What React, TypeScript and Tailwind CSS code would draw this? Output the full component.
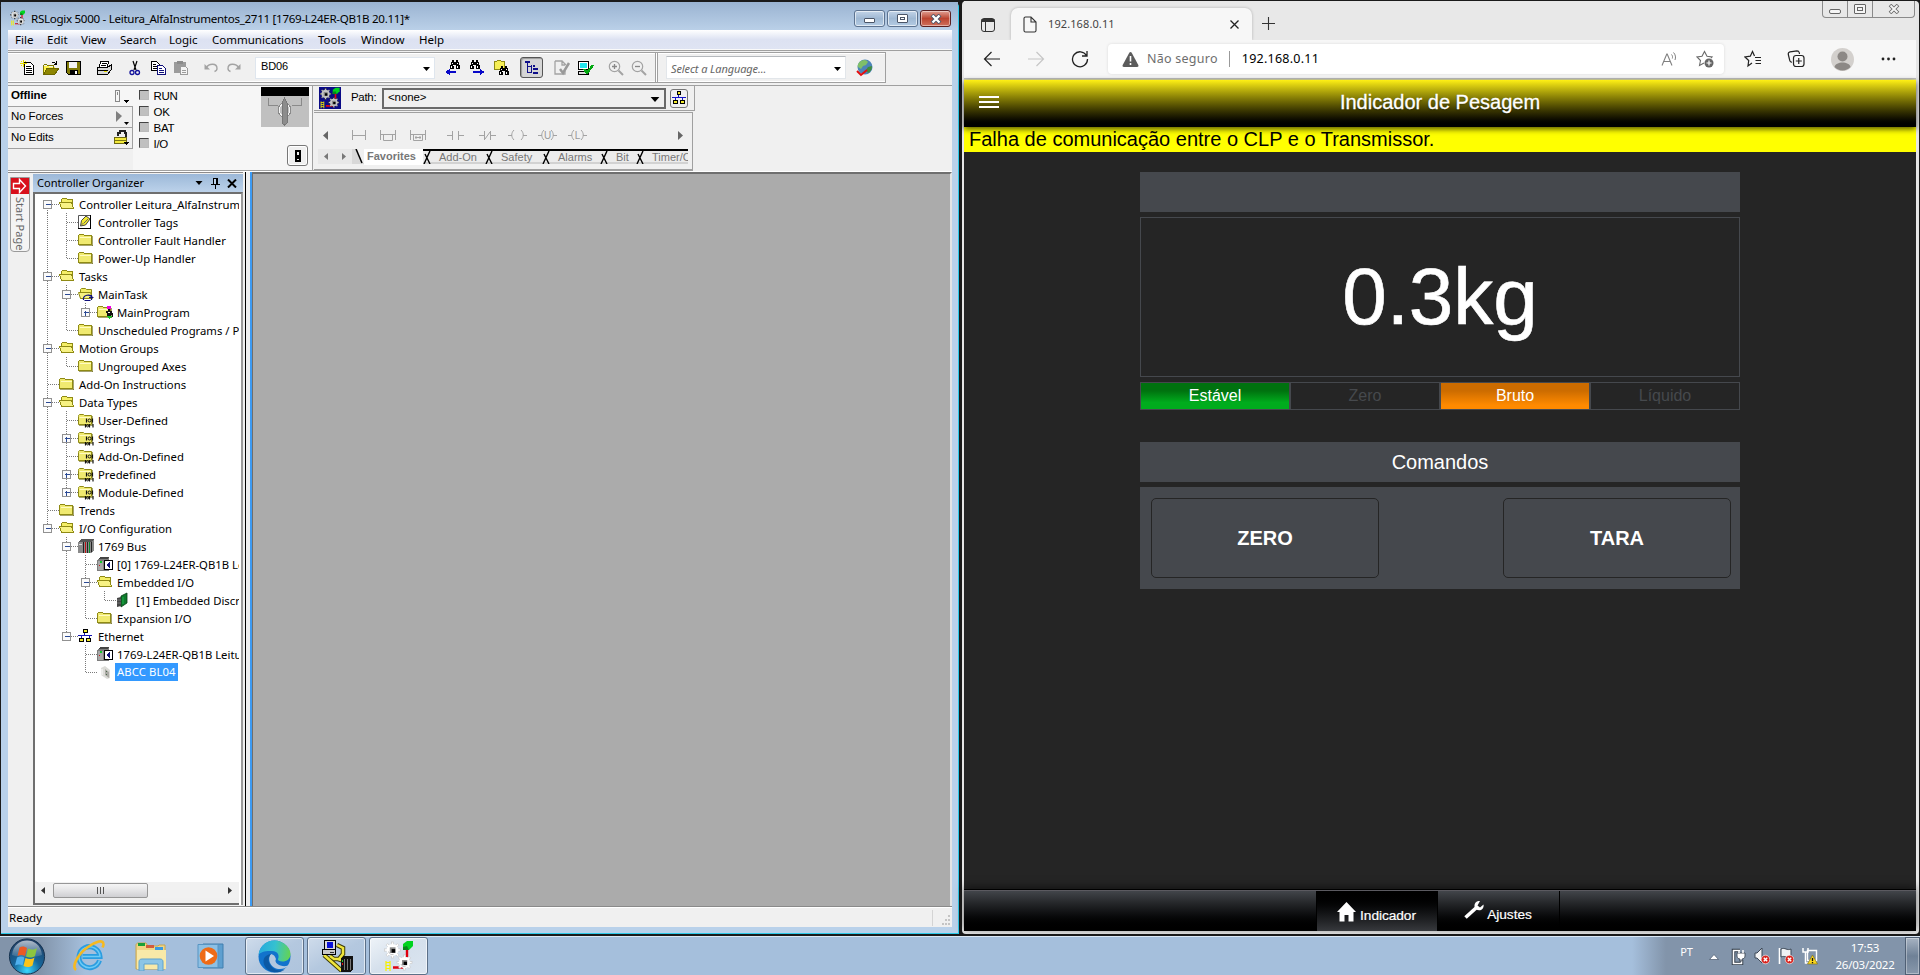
import React from "react";

type SvgProps = { className?: string; children?: React.ReactNode; box?: string };

function Pix({ className = "w-4 h-4", children, box = "0 0 16 16" }: SvgProps) {
  return (
    <svg className={"shrink-0 " + className} viewBox={box} fill="none" shapeRendering="crispEdges">
      {children}
    </svg>
  );
}

function Smooth({ className = "w-4 h-4", children, box = "0 0 16 16" }: SvgProps) {
  return (
    <svg className={"shrink-0 " + className} viewBox={box} fill="none">
      {children}
    </svg>
  );
}

function Down({ className = "w-[7px] h-1" }: { className?: string }) {
  return (
    <Smooth className={className} box="0 0 7 4">
      <path d="M0 0h7L3.5 4z" fill="#000" />
    </Smooth>
  );
}

/* ---------- Application icons ---------- */

function Gear({ x, y, r, fill, line }: { x: number; y: number; r: number; fill: string; line: string }) {
  return (
    <g transform={`translate(${x} ${y})`}>
      {[0, 45, 90, 135].map((a) => (
        <rect key={a} x={-r - 2} y="-1.100" width={2 * r + 4} height="2.200" fill={fill} stroke={line} strokeWidth=".6" transform={`rotate(${a})`} />
      ))}
      <circle r={r} fill={fill} />
      <path d={`M${-r + 2} 1.500a${r - 2} ${r - 2} 0 0 0 ${r - 1} ${r - 3}`} stroke="#b5b5b5" strokeWidth=".8" />
      <rect x={-r * 0.45} y={-r * 0.45} width={r * 0.95} height={r * 0.95} fill="#8a8a8a" />
      <rect x={-r * 0.15} y={-r * 0.15} width={r * 0.6} height={r * 0.6} fill="#000" />
    </g>
  );
}

function GearsIcon({ className = "w-4 h-4", back = "none", gear = "#f2f2f2", line = "none" }) {
  return (
    <Smooth className={className} box="0 0 32 32">
      <rect width="32" height="32" fill={back} />
      <path d="M24 10v7M10 27.500h10" stroke="#e00010" strokeWidth="2.400" />
      <path d="M3 21v10M7 21v10M3 22.500h4M3 25.500h4M3 28.500h4" stroke="#f6f000" strokeWidth="1.200" />
      <path d="M20 4l4-3h6v5l-4 4h-6z" fill="#00d31e" />
      <path d="M20 7l4-1 2 4h-6z" fill="#07861a" />
      <Gear x={9.500} y={10} r={6} fill={gear} line={line} />
      <Gear x={21.500} y={22.500} r={5.500} fill={gear} line={line} />
    </Smooth>
  );
}

function Binoculars({ x = 0, y = 0 }) {
  return (
    <g transform={`translate(${x} ${y})`}>
      <path d="M3 0h2v2h2V0h2v2h1v3h1v4H7V5H5v4H1V5h1V2h1z" fill="#000" />
      <path d="M3 3h1v1H3zM8 3h1v1H8zM2 6h1v2H2zM8 6h1v2H8zM4 5h1v1H4z" fill="#fff" />
    </g>
  );
}

/* ---------- Tree ---------- */

type Node = { t: string; d: number; i: string; e?: "+" | "-"; lines: number[]; first?: boolean; end?: boolean; sel?: boolean };

const nodes: Node[] = [
  { t: "Controller Leitura_AlfaInstrume", d: 0, i: "open", e: "-", lines: [], first: true },
  { t: "Controller Tags", d: 1, i: "tag", lines: [0] },
  { t: "Controller Fault Handler", d: 1, i: "folder", lines: [0] },
  { t: "Power-Up Handler", d: 1, i: "folder", lines: [0], end: true },
  { t: "Tasks", d: 0, i: "open", e: "-", lines: [] },
  { t: "MainTask", d: 1, i: "task", e: "-", lines: [0] },
  { t: "MainProgram", d: 2, i: "prog", e: "+", lines: [0, 1], end: true },
  { t: "Unscheduled Programs / P", d: 1, i: "folder", lines: [0], end: true },
  { t: "Motion Groups", d: 0, i: "open", e: "-", lines: [] },
  { t: "Ungrouped Axes", d: 1, i: "folder", lines: [0], end: true },
  { t: "Add-On Instructions", d: 0, i: "folder", lines: [] },
  { t: "Data Types", d: 0, i: "open", e: "-", lines: [] },
  { t: "User-Defined", d: 1, i: "type", lines: [0] },
  { t: "Strings", d: 1, i: "type", e: "+", lines: [0] },
  { t: "Add-On-Defined", d: 1, i: "type", lines: [0] },
  { t: "Predefined", d: 1, i: "type", e: "+", lines: [0] },
  { t: "Module-Defined", d: 1, i: "type", e: "+", lines: [0], end: true },
  { t: "Trends", d: 0, i: "folder", lines: [] },
  { t: "I/O Configuration", d: 0, i: "open", e: "-", lines: [], end: true },
  { t: "1769 Bus", d: 1, i: "bus", e: "-", lines: [] },
  { t: "[0] 1769-L24ER-QB1B Lei", d: 2, i: "cpu", lines: [1] },
  { t: "Embedded I/O", d: 2, i: "open", e: "-", lines: [1] },
  { t: "[1] Embedded Discr", d: 3, i: "card", lines: [1, 2], end: true },
  { t: "Expansion I/O", d: 2, i: "folder", lines: [1], end: true },
  { t: "Ethernet", d: 1, i: "net", e: "-", lines: [], end: true },
  { t: "1769-L24ER-QB1B Leitu", d: 2, i: "cpu", lines: [] },
  { t: "ABCC BL04", d: 2, i: "dev", lines: [], end: true, sel: true },
];

function FolderShape() {
  return (
    <>
      <path d="M.5 4.500v-1l1-1h4l1 1h7v9H.5z" fill="#f0ea70" stroke="#8f8a14" />
      <path d="M1.500 5.500h11" stroke="#fffbc0" />
      <path d="M14.500 4v9.500H1" stroke="#6b6710" strokeWidth=".6" />
    </>
  );
}

function OpenShape() {
  return (
    <>
      <path d="M2.500 12.500v-9l1-1h4l1 1h5v9z" fill="#f4ee66" stroke="#8f8a14" />
      <path d="M.5 6.500h12l2 6h-12z" fill="#f7f283" stroke="#8f8a14" />
    </>
  );
}

function TreeIcon({ kind }: { kind: string }) {
  const cls = "w-4 h-4";
  switch (kind) {
    case "folder":
      return <Pix className={cls}><FolderShape /></Pix>;
    case "open":
      return <Pix className={cls}><OpenShape /></Pix>;
    case "tag":
      return (
        <Smooth className={cls}>
          <path d="M.5 1.500h12v13H.5z" fill="#fff" stroke="#555" />
          <path d="M12.500 1v14M0 14.500h13" stroke="#000" />
          <path d="M2.500 12l1-5.500L8 2l4 3-4.500 6z" fill="#f2e92e" stroke="#333" strokeWidth=".9" />
          <path d="M6 9l4-4M2.500 12l3-3" stroke="#666" />
        </Smooth>
      );
    case "task":
      return (
        <Smooth className={cls}>
          <OpenShape />
          <path d="M5.500 14c-1-5 7-7 9-2M11 11.500h4.500M13.500 9v5M6.500 14.500h6" stroke="#10107a" strokeWidth="1.200" />
        </Smooth>
      );
    case "prog":
      return (
        <Pix className={cls}>
          <FolderShape />
          <path d="M10 2h4v3h-4z" fill="#f000e0" />
          <path d="M11 5h2v2h-2zM9 7h6v2H9zM14 9h2v4h-3v-1h2zM10 9h4v3h-4z" fill="#111" />
          <path d="M11 8h2v1h-2z" fill="#fff" />
          <path d="M10 12h5v1h-1v1h-1v1h-1v-1h-1v-1h-1z" fill="#17c52a" />
        </Pix>
      );
    case "type":
      return (
        <Smooth className={cls}>
          <FolderShape />
          <path d="M8.500 6.500v4M14.500 6.500v4M7.500 12v3.500M11.500 12v3.500M15 12v3.500" stroke="#111" strokeWidth="1.200" />
          <circle cx="11.500" cy="8.500" r="1.500" stroke="#111" />
          <circle cx="9.600" cy="13.800" r="1.100" stroke="#111" />
        </Smooth>
      );
    case "bus":
      return (
        <Pix className={cls}>
          <path d="M0 4l3-3h13v11l-2 3H0z" fill="#8a8a8a" />
          <path d="M0 4l3-3h13l-2 3z" fill="#555" />
          <path d="M5 4h1v11H5zM9 4h1v11H9zM13 4h1v10h-1z" fill="#222" />
          <path d="M7 4h1v11H7z" fill="#c01313" />
          <path d="M11 4h1v11h-1z" fill="#0a8a2a" />
          <path d="M1 6h3v1H1z" fill="#ddd" />
        </Pix>
      );
    case "cpu":
      return (
        <Pix className={cls}>
          <path d="M0 4l3-3h9v14H0z" fill="#7d7d7d" />
          <path d="M0 4l3-3h9l-2 2H2z" fill="#444" />
          <path d="M1 5h5v9H1z" fill="#a7a7a7" />
          <path d="M3 5h2v2H3z" fill="#11c92a" />
          <path d="M2 9h1v1H2z" fill="#d01515" />
          <path d="M7.500 4.500h8v9h-8z" fill="#fff" stroke="#000" />
          <path d="M13 6v6l-4-3z" fill="#10107a" />
        </Pix>
      );
    case "card":
      return (
        <Smooth className={cls}>
          <path d="M5 4l6-3v10l-6 4z" fill="#0f7a2c" stroke="#063d14" strokeWidth=".8" />
          <path d="M1 6l4-1v9l-4 1z" fill="#444" />
          <path d="M7 5v7" stroke="#1db14a" />
          <path d="M1 8h4M1 11h4" stroke="#999" strokeWidth=".6" />
        </Smooth>
      );
    case "net":
      return (
        <Pix className={cls}>
          <path d="M0 7h14v1H0zM6 5h1v3H6zM3 8h1v2H3zM11 8h1v2h-1z" fill="#1515b5" />
          <path d="M5.500 1.500h4v3h-4zM1.500 10.500h4v3h-4zM8.500 10.500h4v3h-4z" fill="#f2ea2c" stroke="#000" />
        </Pix>
      );
    default:
      return (
        <Smooth className={cls}>
          <path d="M4 4l4-2 5 4v8l-3 1-6-4z" fill="#dcdcd8" />
          <path d="M8 5l4 3v6l-4-3z" fill="#aaa9a4" />
          <path d="M5 5v6" stroke="#fff" />
          <path d="M9 7l1 1M9 10l1 1" stroke="#4d6b4d" />
        </Smooth>
      );
  }
}

function TreeRow({ n }: { n: Node }) {
  const w = 19 * (n.d + 1) + 2;
  const cx = 19 * n.d + 9.5;
  return (
    <div className="flex h-[18px] items-center whitespace-nowrap">
      <svg className="h-[18px] shrink-0" width={w} height="18" fill="none" shapeRendering="crispEdges">
        <g stroke="#7a7a7a" strokeDasharray="1 1">
          {n.lines.map((l) => (
            <path key={l} d={`M${19 * l + 9.5} 0v18`} />
          ))}
          <path d={n.first ? `M${cx} 9v9` : `M${cx} 0v${n.end ? 9 : 18}`} />
          <path d={`M${cx} 9.500H${w}`} />
        </g>
        {n.e && (
          <>
            <rect x={cx - 4} y="5.500" width="8" height="8" fill="#fbfbfb" stroke="#919191" />
            <path d={`M${cx - 2} 9.500h5`} stroke="#2b4a94" />
            {n.e === "+" && <path d={`M${cx} 7.500v5`} stroke="#2b4a94" />}
          </>
        )}
      </svg>
      <TreeIcon kind={n.i} />
      <span
        className={
          n.sel
            ? "ml-[2px] h-[18px] bg-[#3399ff] px-[2px] leading-[17px] text-white tracking-[0.1px]"
            : "ml-1 leading-[17px] text-black"
        }
      >
        {n.t}
      </span>
    </div>
  );
}

/* ---------- RSLogix window ---------- */

const menus = [
  ["File", "w-8"],
  ["Edit", "w-[34px]"],
  ["View", "w-[39px]"],
  ["Search", "w-[49px]"],
  ["Logic", "w-[43px]"],
  ["Communications", "w-[106px]"],
  ["Tools", "w-[43px]"],
  ["Window", "w-[58px]"],
  ["Help", "w-10"],
];

function TitleBar() {
  return (
    <div className="flex h-7 items-center bg-gradient-to-b from-[#9ab3d1] to-[#bad0e8] pl-[9px] pr-[7px]">
      <GearsIcon className="mt-1 h-4 w-4" gear="#e4e4e4" line="#111" />
      <span className="ml-[5px] mt-[6px] whitespace-nowrap text-[11.6px] leading-4 tracking-[-0.3px] text-black">
        RSLogix 5000 - Leitura_AlfaInstrumentos_2711 [1769-L24ER-QB1B 20.11]*
      </span>
      <div className="ml-auto mt-[5px] flex gap-[2px]">
        <div className="flex h-[17px] w-[31px] items-center justify-center rounded-[3px] border border-[#5d7390] bg-gradient-to-b from-[#c3d4e8] via-[#9fb8d3] to-[#b4cce4] shadow-[inset_0_0_0_1px_rgba(255,255,255,0.6)]">
          <span className="mt-[3px] h-[5px] w-[11px] rounded-[1px] border border-[#4a5568] bg-white" />
        </div>
        <div className="flex h-[17px] w-[31px] items-center justify-center rounded-[3px] border border-[#5d7390] bg-gradient-to-b from-[#c3d4e8] via-[#9fb8d3] to-[#b4cce4] shadow-[inset_0_0_0_1px_rgba(255,255,255,0.6)]">
          <span className="flex h-[9px] w-[11px] items-center justify-center rounded-[1px] border border-[#4a5568] bg-white">
            <span className="h-[3px] w-[5px] border border-[#4a5568]" />
          </span>
        </div>
        <div className="flex h-[17px] w-[31px] items-center justify-center rounded-[3px] border border-[#5b1f1f] bg-gradient-to-b from-[#e0a094] via-[#bb4430] to-[#d0705c] shadow-[inset_0_0_0_1px_rgba(255,255,255,0.45)]">
          <Smooth className="h-[10px] w-3" box="0 0 12 10">
            <path d="M2 1l8 8M10 1L2 9" stroke="#4a5568" strokeWidth="4" />
            <path d="M2.500 1.500l7 7M9.500 1.500l-7 7" stroke="#fff" strokeWidth="2.300" />
          </Smooth>
        </div>
      </div>
    </div>
  );
}

function StandardBar() {
  return (
    <div className="flex h-[31px] items-center border-y border-[#a0a0a0] shadow-[inset_0_1px_0_#fff,inset_0_-1px_0_#fff]">
      <div className="flex w-[247px] items-center">
        <Pix className="ml-3 h-4 w-4">
          <path d="M4.500 2.500h6l3 3v9h-9z" fill="#fff" stroke="#000" />
          <path d="M6 6h5v1H6zM6 8h6v1H6zM6 10h6v1H6zM6 12h6v1H6z" fill="#000" />
          <path d="M3 0h1v7H3zM0 3h7v1H0zM1 1h1v1H1zM5 1h1v1H5zM1 5h1v1H1z" fill="#e8df00" />
        </Pix>
        <Pix className="ml-[7px] h-4 w-4">
          <path d="M1 6h4l1 1h6v7H1z" fill="#fff34a" />
          <path d="M0 5h1v9H0zM1 4h3v1H1zM4 5h7v3h-1V6H4zM0 14h11v1H0z" fill="#7c7700" />
          <path d="M4 8h12l-4 6H1z" fill="#8d8500" stroke="#6b6600" />
          <path d="M9 2h3v1H9zM12 3h1v1h-1zM13 1h1v4h-3V4h2z" fill="#000" />
        </Pix>
        <Pix className="ml-[7px] h-4 w-4">
          <path d="M.5 1.500h14v13H2.500l-2-2z" fill="#817b07" stroke="#000" />
          <path d="M3 2h8v6H3z" fill="#f3f3f3" />
          <path d="M4 10h8v4H4z" fill="#000" />
          <path d="M9 11h2v3H9z" fill="#fff" />
        </Pix>
        <Pix className="ml-[14px] h-4 w-[17px]" box="0 0 17 16">
          <path d="M5 1h8l-2 6H3z" fill="#fff" stroke="#000" />
          <path d="M1 7h11l3-2v5l-3 4H1z" fill="#d7d7d7" stroke="#000" />
          <path d="M6 3h5v1H6zM5 5h5v1H5zM2 10h10v1H2z" fill="#000" />
          <path d="M8 11h3v1H8z" fill="#e6dc00" />
        </Pix>
        <Smooth className="ml-[14px] h-4 w-4">
          <path d="M6 1l3 9M10 1L7 10" stroke="#000" strokeWidth="1.200" />
          <circle cx="5" cy="12.500" r="2" stroke="#10109a" strokeWidth="1.300" />
          <circle cx="10.500" cy="12.500" r="2" stroke="#10109a" strokeWidth="1.300" />
        </Smooth>
        <Pix className="ml-[7px] h-4 w-4">
          <path d="M1.500 1.500h5l3 3v6h-8z" fill="#fff" stroke="#000" />
          <path d="M3 4h3v1H3zM3 6h4v1H3zM3 8h4v1H3z" fill="#000" />
          <path d="M7.500 5.500h5l3 3v6h-8z" fill="#fff" stroke="#10107a" />
          <path d="M9 8h3v1H9zM9 10h5v1H9zM9 12h5v1H9z" fill="#10107a" />
        </Pix>
        <Pix className="ml-[7px] h-4 w-4">
          <path d="M1 2h12v11H1z" fill="#9b9b9b" />
          <path d="M4 1h6v3H4z" fill="#8b8b8b" />
          <path d="M7.500 6.500h5l2 2v6h-7z" fill="#f5f5f5" stroke="#9b9b9b" />
          <path d="M9 10h4v1H9zM9 12h4v1H9z" fill="#9b9b9b" />
        </Pix>
        <Smooth className="ml-[14px] h-4 w-4">
          <path d="M1.500 4v5.500H7z" fill="#a3a3a3" />
          <path d="M3 8c3-5 11-5 11 .5 0 1.500-1 2.500-2.500 3" stroke="#a3a3a3" strokeWidth="1.400" />
        </Smooth>
        <Smooth className="ml-[7px] h-4 w-4">
          <path d="M14.500 4v5.500H9z" fill="#a3a3a3" />
          <path d="M13 8c-3-5-11-5-11 .5 0 1.500 1 2.500 2.500 3" stroke="#a3a3a3" strokeWidth="1.400" />
        </Smooth>
      </div>
      <div className="flex h-[22px] w-[180px] items-center border border-[#dfe6ee] bg-white pl-[5px] pr-1 text-[11px] tracking-[-0.1px] text-black">
        <span className="-mt-[2px] font-['Liberation_Sans',sans-serif]">BD06</span>
        <Down className="ml-auto mt-[2px] h-1 w-[7px]" />
      </div>
      <Pix className="ml-[10px] h-[17px] w-[17px]" box="0 0 17 17">
        <Binoculars x={4} y={1} />
        <path d="M0 13l5-3v2h6v2H5v2z" fill="#0808c8" />
      </Pix>
      <Pix className="ml-[7px] h-[17px] w-[17px]" box="0 0 17 17">
        <Binoculars x={0} y={1} />
        <path d="M16 13l-5-3v2H4v2h7v2z" fill="#0808c8" />
      </Pix>
      <Pix className="ml-[7px] h-[17px] w-[17px]" box="0 0 17 17">
        <path d="M1.500 2.500h2l1-1h3l1 1h3v8h-10z" fill="#f6ef55" stroke="#8f8a14" />
        <Binoculars x={5} y={7} />
      </Pix>
      <div className="ml-[10px] flex h-[21px] w-[23px] items-center justify-center rounded-[3px] border border-[#555] bg-[#d6d6d6] shadow-[inset_1px_1px_1px_#999]">
        <Pix className="h-[15px] w-[15px]" box="0 0 15 15">
          <path d="M1 1h5v2H1zM3 3h1v10H3zM4 6h3v1H4zM4 12h3v1H4z" fill="#10108a" />
          <path d="M7 5h1v8H7zM9 5h2v2H9zM9 8h5v2H9zM9 12h5v2H9z" fill="#10108a" />
        </Pix>
      </div>
      <Smooth className="ml-[11px] h-4 w-[17px]" box="0 0 17 16">
        <path d="M1 1h7l4 4M1 1v13h10v-3M8 1v4h3" stroke="#a3a3a3" strokeWidth="1.300" />
        <path d="M6 9l3 4 6-10" stroke="#999" strokeWidth="2.500" />
      </Smooth>
      <Pix className="ml-[6px] h-4 w-[17px]" box="0 0 17 16">
        <path d="M1.500 1.500h10v8h-10z" fill="#fff" stroke="#000" />
        <path d="M3 3h7v5H3z" fill="#22e5ee" />
        <path d="M1.500 11.500h10v3h-10z" fill="#ddd" stroke="#000" />
        <path d="M7 9l3 4 6-8" stroke="#00a810" strokeWidth="2.500" />
      </Pix>
      <Smooth className="ml-[14px] h-4 w-4">
        <circle cx="6.500" cy="6.500" r="5.200" stroke="#a3a3a3" strokeWidth="1.200" />
        <path d="M4 6.500h5M6.500 4v5" stroke="#888" strokeWidth="1.300" />
        <path d="M10.500 10.500l4.500 4.500" stroke="#a3a3a3" strokeWidth="2" />
      </Smooth>
      <Smooth className="ml-[7px] h-4 w-4">
        <circle cx="6.500" cy="6.500" r="5.200" stroke="#a3a3a3" strokeWidth="1.200" />
        <path d="M4 6.500h5" stroke="#888" strokeWidth="1.300" />
        <path d="M10.500 10.500l4.500 4.500" stroke="#a3a3a3" strokeWidth="2" />
      </Smooth>
      <div className="ml-[8px] h-[29px] w-[3px] border-x border-[#a0a0a0] bg-white" />
      <div className="ml-[8px] flex h-[23px] w-[180px] items-center border border-[#e2e6ea] border-t-[#b5b9bd] bg-white pl-1 pr-1 text-[11px] italic text-[#666]">
        <span className="mt-1 tracking-[-0.1px]">Select a Language...</span>
        <Down className="ml-auto mt-[2px] h-1 w-[7px]" />
      </div>
      <Smooth className="ml-[10px] h-[18px] w-[18px]" box="0 0 18 18">
        <circle cx="9" cy="8" r="7.500" fill="#4c84b8" />
        <path d="M5 2c3-2 6-1 7 1l-2 3-3 1-2 3-3-2c-1-2 1-5 3-6z" fill="#7fbf68" />
        <path d="M12 8l4-1c0 4-2 6-4 7l-2-3z" fill="#3f8c3c" />
        <path d="M1 12l4 4 6-5" stroke="#e30d0d" strokeWidth="2" />
      </Smooth>
    </div>
  );
}

function StatusPanel() {
  return (
    <div className="flex h-[84px] w-[305px] border-r border-[#a0a0a0] bg-[#f6f6f6] font-['Liberation_Sans',sans-serif] text-[11.5px] tracking-[-0.1px] text-black">
      <div className="flex w-[125px] flex-col">
        <div className="flex h-[20px] items-center pl-[3px] pr-1">
          <span className="font-bold tracking-[-0.1px]">Offline</span>
          <Pix className="ml-auto h-4 w-[15px]" box="0 0 15 16">
            <path d="M1.500 2.500h4v11h-4z" fill="#f5f5f5" stroke="#888" />
            <path d="M3 4h1v3H3z" fill="#888" />
            <path d="M10 12h5l-2.500 3z" fill="#000" />
          </Pix>
        </div>
        <div className="flex h-[22px] items-center border border-l-0 border-[#a0a0a0] bg-[#f0f0f0] pl-[3px] pr-[3px]">
          <span>No Forces</span>
          <Smooth className="ml-auto h-[18px] w-[15px]" box="0 0 15 18">
            <path d="M2 3l6 5-6 6z" fill="#808080" />
            <path d="M10 14h5l-2.500 3z" fill="#000" />
          </Smooth>
        </div>
        <div className="flex h-[21px] items-center border border-l-0 border-t-0 border-[#a0a0a0] bg-[#f0f0f0] pl-[3px] pr-[3px]">
          <span>No Edits</span>
          <Pix className="ml-auto h-4 w-[15px]" box="0 0 15 16">
            <path d="M4 6V3h2V1h5v2h1v4" stroke="#222" strokeWidth="1.500" />
            <path d="M.5 7.500h12v6h-12z" fill="#f3e93a" stroke="#6d6812" />
            <path d="M1 10h11v1H1z" fill="#7a7512" />
            <path d="M9 12h6l-3 3z" fill="#000" />
          </Pix>
        </div>
        <div className="grow bg-[#f0f0f0]" />
      </div>
      <div className="flex w-[120px] flex-col gap-[7px] pl-[6px] pt-[5px]">
        {["RUN", "OK", "BAT", "I/O"].map((t) => (
          <div key={t} className="flex h-[9px] items-center gap-[5px]">
            <span className="mb-px h-[10px] w-[10px] border border-[#bbb] border-l-[#444] border-t-[#444] bg-[#c0c0c0]" />
            <span className="pt-[3px] leading-none tracking-[-0.3px]">{t}</span>
          </div>
        ))}
      </div>
      <div className="flex w-[60px] flex-col items-end">
        <Pix className="mr-[3px] mt-px h-10 w-12" box="0 0 48 40">
          <path d="M0 0h48v40H0z" fill="#c0c0c0" />
          <path d="M0 0h48v9H0z" fill="#000" />
          <path d="M7.500 11v7.500H17M40.500 11v7.500H31" stroke="#8a8a8a" />
          <ellipse cx="23.500" cy="23" rx="6.500" ry="7" stroke="#8a8a8a" />
          <ellipse cx="23.500" cy="23" rx="5.500" ry="6" stroke="#f2f2f2" />
          <path d="M23.500 11l2.500 5v20l-2.500 2-2.500-2V16z" fill="#8c8c8c" stroke="#777" />
        </Pix>
        <div className="mr-1 mt-[18px] flex h-[21px] w-[21px] items-center justify-center rounded-[3px] border border-[#777] bg-[#f0f0f0] shadow-[inset_0_0_0_1px_#fff]">
          <Pix className="h-3 w-[6px]" box="0 0 6 12">
            <path d="M0 0h6v12H0z" fill="#000" />
            <path d="M2 2h2v8H2z" fill="#eee" />
            <path d="M2 5h2v4H2z" fill="#000" />
          </Pix>
        </div>
      </div>
    </div>
  );
}

function LadderIcon({ d, t, cls }: { d: string; t?: string; cls: string }) {
  return (
    <svg className={"h-4 shrink-0 " + cls} height="16" fill="none">
      <path d={d} stroke="#a3a3a3" strokeWidth="1" />
      {t && (
        <text x="9.500" y="12" textAnchor="middle" fontSize="10" fill="#999" fontFamily="Liberation Sans">
          {t}
        </text>
      )}
    </svg>
  );
}

const tabs: [string, string][] = [
  ["Add-On", "w-[62px]"],
  ["Safety", "w-[57px]"],
  ["Alarms", "w-[58px]"],
  ["Bit", "w-[36px]"],
  ["Timer/Co", "w-[54px]"],
];

function InstructionArea() {
  return (
    <div className="flex flex-col pl-px">
      <div className="flex h-[25px] w-[381px] items-center border-b border-r border-[#a0a0a0] pl-1">
        <GearsIcon className="h-[22px] w-6" back="#0a0a86" gear="#c4c4c4" line="#222" />
        <span className="ml-[9px] w-[31px] font-['Liberation_Sans',sans-serif] text-[11.500px] tracking-[-0.3px] text-black">Path:</span>
        <div className="flex h-[21px] w-[284px] items-center border-2 border-[#6a6a6a] bg-[#f0f0f0] pl-1 pr-1">
          <span className="font-['Liberation_Sans',sans-serif] text-[11.500px] tracking-[-0.1px] text-black">&lt;none&gt;</span>
          <Down className="ml-auto mt-[2px] h-[5px] w-[10px]" />
        </div>
        <div className="ml-1 flex h-[19px] w-[18px] items-center justify-center rounded-[3px] border border-[#777] bg-[#f0f0f0]">
          <Pix className="h-[14px] w-[14px]" box="0 0 14 14">
            <path d="M0 6h14v1H0zM6 4h1v2H6zM3 7h1v2H3zM10 7h1v2h-1z" fill="#1515c5" />
            <path d="M5.500.5h3v3h-3zM1.500 9.500h4v3h-4zM8.500 9.500h4v3h-4z" fill="#f2ea2c" stroke="#000" />
          </Pix>
        </div>
      </div>
      <div className="mt-px flex h-[58px] w-[379px] flex-col border border-l-0 border-[#a0a0a0]">
        <div className="flex h-[36px] items-end pb-[6px] pl-[9px]">
          <Smooth className="mb-[3px] h-[9px] w-[5px]" box="0 0 5 9"><path d="M5 0v9L0 4.500z" fill="#666" /></Smooth>
          <LadderIcon cls="ml-6 w-[14px]" d="M.5 3v10M13.500 3v10M0 8.500h14" />
          <LadderIcon cls="ml-[14px] w-[17px]" d="M.5 3v10M15.500 3v10M0 7.500h16M3.500 7.500v6h9v-6" />
          <LadderIcon cls="ml-[13px] w-[17px]" d="M.5 3v10M15.500 3v10M0 7.500h16M3.500 7.500v6h9v-6M6 9v3M10 9v3M5 10.500h6" />
          <LadderIcon cls="ml-[20px] w-[18px]" d="M0 8.500h5.500M5.500 4v9M11.500 4v9M11.500 8.500H17" />
          <LadderIcon cls="ml-[14px] w-[18px]" d="M0 8.500h5.500M5.500 4v9M11.500 4v9M11.500 8.500H17M6 12l5-7" />
          <LadderIcon cls="ml-[11px] w-[19px]" d="M0 8.500h4M6 3c-3 3-3 7 0 10M13 3c3 3 3 7 0 10M15 8.500h4" />
          <LadderIcon cls="ml-[11px] w-[19px]" t="U" d="M0 8.500h4M6 3c-3 3-3 7 0 10M13 3c3 3 3 7 0 10M15 8.500h4" />
          <LadderIcon cls="ml-[11px] w-[19px]" t="L" d="M0 8.500h4M6 3c-3 3-3 7 0 10M13 3c3 3 3 7 0 10M15 8.500h4" />
          <Smooth className="mb-[3px] ml-auto mr-[9px] h-[9px] w-[5px]" box="0 0 5 9"><path d="M0 0v9l5-4.500z" fill="#666" /></Smooth>
        </div>
        <div className="ml-1 flex h-[16px] font-['Liberation_Sans',sans-serif] text-[11px] leading-[14px] text-[#777]">
          <div className="flex h-[15px] w-[34px] items-center justify-between bg-[#e8e8e8] px-[6px]">
            <Smooth className="h-[7px] w-1" box="0 0 4 7"><path d="M4 0v7L0 3.500z" fill="#777" /></Smooth>
            <Smooth className="h-[7px] w-1" box="0 0 4 7"><path d="M0 0v7l4-3.500z" fill="#777" /></Smooth>
          </div>
          <svg className="h-[15px] w-[12px] shrink-0" fill="none"><path d="M0 15V0h5l5 14h2v1z" fill="#d8d8d8" /><path d="M4 0l6 14" stroke="#000" strokeWidth="1.500" /></svg>
          <span className="w-[59px] bg-white pl-[3px] font-bold">Favorites</span>
          <div className="flex w-[265px] overflow-hidden">
            {tabs.map(([t, w]) => (
              <div key={t} className={"flex h-[15px] shrink-0 border-t-2 border-black border-b-2 border-b-[#d2d2d2] bg-[#ececec] " + w}>
                <svg className="h-[13px] w-[9px] shrink-0" fill="none"><path d="M7 0L1 13M2 3l5 10" stroke="#000" strokeWidth="1.400" /></svg>
                <span className="-mt-px ml-[7px] whitespace-nowrap">{t}</span>
              </div>
            ))}
          </div>
        </div>
      </div>
    </div>
  );
}

function Organizer() {
  return (
    <div className="flex w-[210px] flex-col">
      <div className="flex h-[18px] items-center bg-gradient-to-b from-[#9cb8d8] to-[#bcd2ea] pl-1 pr-[6px] text-[11.100px] text-black">
        <span>Controller Organizer</span>
        <Down className="ml-auto h-1 w-2" />
        <Pix className="ml-2 h-[11px] w-[9px]" box="0 0 9 11">
          <path d="M2 0h5v6H2zM0 6h9v1H0zM4 7h1v4H4z" fill="#000" />
          <path d="M3 1h2v5H3z" fill="#bcd2ea" />
        </Pix>
        <Smooth className="ml-[7px] h-[9px] w-[10px]" box="0 0 10 9"><path d="M1 .5l8 8M9 .5l-8 8" stroke="#000" strokeWidth="2" /></Smooth>
      </div>
      <div className="flex h-[713px] flex-col border-2 border-b-0 border-[#6f6f6f] border-r-[#9a9a9a] bg-white pr-[2px]">
        <div className="flex h-[688px] flex-col overflow-hidden pl-[3px] pt-[1px] text-[11.300px]">
          {nodes.map((n, i) => (
            <TreeRow key={i} n={n} />
          ))}
        </div>
        <div className="flex h-[16px] items-center bg-[#f1f1f1] pl-[6px] pr-[7px]">
          <Smooth className="h-[7px] w-1" box="0 0 4 7"><path d="M4 0v7L0 3.500z" fill="#333" /></Smooth>
          <div className="ml-2 flex h-[15px] w-[95px] items-center justify-center gap-[2px] rounded-[2px] border border-[#979797] bg-gradient-to-b from-[#f5f5f5] via-[#e4e4e6] to-[#cfcfd2]">
            <i className="h-[7px] w-px bg-[#555]" />
            <i className="h-[7px] w-px bg-[#555]" />
            <i className="h-[7px] w-px bg-[#555]" />
          </div>
          <Smooth className="ml-auto h-[7px] w-1" box="0 0 4 7"><path d="M0 0v7l4-3.500z" fill="#333" /></Smooth>
        </div>
        <div className="grow bg-[#f0f0f0]" />
        <div className="h-[2px] bg-[#6f6f6f]" />
      </div>
    </div>
  );
}

function LogixWindow() {
  return (
    <div className="flex w-[959px] flex-col rounded-t-[5px] border-l border-[#1b1b1b] border-r border-r-[#2cc9e8] bg-[#b9d1ea]">
      <TitleBar />
      <div className="ml-[7px] mr-[6px] flex h-[897px] flex-col bg-[#f0f0f0]">
        <div className="flex h-[19px] items-center bg-gradient-to-b from-white via-[#dde2f2] to-[#dfe4f3] pl-[7px] text-[11.500px] text-black">
          {menus.map(([m, w]) => (
            <span key={m} className={w}>{m}</span>
          ))}
        </div>
        <div className="h-[2px] border-b border-[#a0a0a0] bg-[#fafafa]" />
        <div className="mt-px w-[878px] border-r border-[#a0a0a0]">
          <StandardBar />
        </div>
        <div className="mt-[2px] flex border-t border-[#a0a0a0]">
          <StatusPanel />
          <InstructionArea />
        </div>
        <div className="h-px w-[685px] bg-[#a0a0a0]" />
        <div className="h-px bg-white" />
        <div className="flex h-[734px]">
          <div className="w-[25px] shrink-0 border-t border-[#8d8b8b] pl-[2px] pt-[4px]">
            <div className="flex h-[75px] w-5 flex-col items-center rounded-b-[4px] border border-[#9a9a9a] bg-[#f4f4f4]">
              <Pix className="h-4 w-[18px]" box="0 0 18 16">
                <path d="M0 0h18v16H0z" fill="#d8101c" />
                <path d="M2.500 5.500h6v-4l6 6.500-6 6.500v-4h-6z" fill="#d8101c" stroke="#fff" strokeWidth="1.400" shapeRendering="auto" />
              </Pix>
              <span className="mt-[3px] whitespace-nowrap text-[11px] leading-4 text-[#666] [writing-mode:vertical-rl]">Start Page</span>
            </div>
          </div>
          <div className="border-t border-[#8d8b8b] pt-px">
            <Organizer />
          </div>
          <div className="ml-[2px] w-px bg-black" />
          <div className="ml-[4px] w-[2px] bg-[#3c9bf5]" />
          <div className="grow border-l border-r-2 border-t-2 border-[#6f6f6f] border-r-[#e4e4e4] bg-[#ababab]" />
        </div>
        <div className="h-[2px] border-t border-[#8a8a8a] bg-white" />
        <div className="flex grow items-center bg-[#f0f0f0] pl-[1px] text-[11.500px] text-black">
          <span>Ready</span>
          <span className="ml-auto h-4 w-px bg-[#d4d4d4]" />
          <Pix className="ml-[9px] mr-px mt-1 h-3 w-[9px]" box="0 0 9 12">
            <path d="M6 1h2v2H6zM6 5h2v2H6zM6 9h2v2H6zM3 5h2v2H3zM3 9h2v2H3zM0 9h2v2H0z" fill="#c4c4c4" />
          </Pix>
        </div>
      </div>
      <div className="grow border-b border-[#2cc9e8]" />
    </div>
  );
}

/* ---------- Browser window ---------- */

function BrowserChrome() {
  return (
    <>
      <div className="flex h-[39px] shrink-0 bg-[#e8e8e8]">
        <div className="flex w-[47px] items-center justify-center pt-2">
          <Smooth className="h-4 w-4">
            <rect x="1.500" y="1.500" width="13" height="13" rx="2.500" stroke="#333" />
            <path d="M1.500 2h13v3h-13z" fill="#333" />
            <path d="M5.500 5v9" stroke="#333" />
          </Smooth>
        </div>
        <div className="mt-[7px] flex w-[241px] items-center rounded-t-[7px] bg-[#f7f7f7] pl-[12px] pr-[13px] text-[11px] text-[#444] shadow-[0_0_3px_rgba(0,0,0,0.25)]">
          <Smooth className="h-[17px] w-[14px]" box="0 0 14 17">
            <path d="M1 2.500A1.500 1.500 0 0 1 2.500 1H8l5 5v8.500a1.500 1.500 0 0 1-1.500 1.500h-9A1.500 1.500 0 0 1 1 14.500zM8 1v5h5" stroke="#333" strokeWidth="1.100" />
          </Smooth>
          <span className="ml-[11px] tracking-[0.1px]">192.168.0.11</span>
          <Smooth className="ml-auto h-[9px] w-[9px]" box="0 0 9 9"><path d="M.5.500l8 8M8.500.5l-8 8" stroke="#222" strokeWidth="1.300" /></Smooth>
        </div>
        <Smooth className="ml-[9px] mt-[15px] h-[15px] w-[15px]" box="0 0 15 15"><path d="M7.500 1v13M1 7.500h13" stroke="#333" strokeWidth="1.100" /></Smooth>
        <div className="ml-auto mr-px flex h-[17px] rounded-b-[4px] border border-t-0 border-[#8a8a8a]">
          <div className="flex w-[25px] items-center justify-center border-r border-[#8a8a8a]">
            <span className="mt-[5px] h-[5px] w-3 rounded-[2px] border border-[#666] bg-[#f5f5f5]" />
          </div>
          <div className="flex w-[25px] items-center justify-center border-r border-[#8a8a8a]">
            <span className="flex h-[10px] w-3 items-center justify-center rounded-[1px] border border-[#666] bg-[#f5f5f5]">
              <span className="h-1 w-[6px] border border-[#666]" />
            </span>
          </div>
          <div className="flex w-[41px] items-center justify-center">
            <Smooth className="h-[10px] w-3" box="0 0 12 10">
              <path d="M2 1l8 8M10 1L2 9" stroke="#666" strokeWidth="3.600" />
              <path d="M2.500 1.500l7 7M9.500 1.500l-7 7" stroke="#f5f5f5" strokeWidth="1.900" />
            </Smooth>
          </div>
        </div>
      </div>
      <div className="flex h-[39px] shrink-0 items-center border-b border-[#c0c0c0] bg-[#f7f7f7]">
        <Smooth className="ml-[19px] h-[18px] w-[18px]" box="0 0 18 18"><path d="M17 9H1.500M8.500 2l-7 7 7 7" stroke="#222" strokeWidth="1.200" /></Smooth>
        <Smooth className="ml-[26px] h-[18px] w-[18px]" box="0 0 18 18"><path d="M1 9h15.500M9.500 2l7 7-7 7" stroke="#c6c6c6" strokeWidth="1.200" /></Smooth>
        <Smooth className="ml-[26px] h-[18px] w-[18px]" box="0 0 18 18"><path d="M15.500 5.500A7.500 7.500 0 1 0 16.500 9M16 1v5h-5" stroke="#222" strokeWidth="1.300" /></Smooth>
        <div className="ml-[19px] flex h-[30px] w-[616px] items-center rounded-[4px] bg-white pl-[14px] pr-[10px] text-[12.500px] shadow-[0_0_3px_rgba(0,0,0,0.12)]">
          <Smooth className="h-[15px] w-[17px]" box="0 0 17 15">
            <path d="M8.500 0c.6 0 .9.300 1.200.8l6.600 12.200c.500 1-.1 2-1.200 2H1.900C.800 15 .2 14 .7 13L7.300.8c.3-.5.6-.8 1.200-.8z" fill="#5c5c5c" />
            <path d="M8.500 4v5.500M8.500 11v2" stroke="#fff" strokeWidth="1.600" />
          </Smooth>
          <span className="ml-2 tracking-[0.25px] text-[#6e6e6e]">Não seguro</span>
          <span className="ml-[11px] h-4 w-px bg-[#999]" />
          <span className="ml-[12px] tracking-[0.250px] text-black">192.168.0.11</span>
          <Smooth className="ml-auto h-4 w-[17px]" box="0 0 17 16">
            <path d="M1 14.500L5.800 3h.4L11 14.500M2.600 10.500h6.800" stroke="#808080" strokeWidth="1.100" />
            <path d="M10.500 3.500c1 1 1.300 2.500.8 4M12.500 1.500c2 2 2.500 5 1.500 7.500" stroke="#808080" />
          </Smooth>
          <Smooth className="ml-[18px] h-[18px] w-[18px]" box="0 0 18 18">
            <path d="M8 13l-4.500 2.500 1-5L1 7l5-.7L8.500 1.500 11 6.300l5 .7-1 1" stroke="#6a6a6a" strokeWidth="1.100" />
            <circle cx="13" cy="13" r="4.500" fill="#666" />
            <path d="M13 10.500v5M10.500 13h5" stroke="#fff" strokeWidth="1.200" />
          </Smooth>
        </div>
        <Smooth className="ml-5 h-[18px] w-[18px]" box="0 0 18 18">
          <path d="M8 13l-4 3 .7-5.500L1 7l5.300-.8L8.500 1.500l2 4.500M11 7.500h6M11.500 10.500h5.500M11.500 13.500h5.500" stroke="#222" strokeWidth="1.200" />
        </Smooth>
        <Smooth className="ml-[25px] h-[18px] w-[18px]" box="0 0 18 18">
          <path d="M5 12c-1 .2-2-.3-2.200-1.500L1.300 4.500C1 3 2 2 3 1.800L10 .8c1 0 2 .7 2.200 1.700l.3 1.500" stroke="#222" strokeWidth="1.200" />
          <rect x="6.500" y="5.500" width="10.500" height="11" rx="2.500" stroke="#222" strokeWidth="1.200" />
          <path d="M11.750 8v6M8.800 11h6" stroke="#222" strokeWidth="1.200" />
        </Smooth>
        <Smooth className="ml-[26px] h-[23px] w-[23px]" box="0 0 23 23">
          <circle cx="11.500" cy="11.500" r="11.500" fill="#d3d0cd" />
          <circle cx="11.500" cy="8.500" r="5" fill="#8c8885" />
          <path d="M3.500 19c1-6 15-6 16 0-4 4.500-12 4.500-16 0z" fill="#8c8885" />
        </Smooth>
        <Smooth className="ml-[27px] h-1 w-[15px]" box="0 0 15 4">
          <circle cx="2" cy="2" r="1.400" fill="#222" />
          <circle cx="7.500" cy="2" r="1.400" fill="#222" />
          <circle cx="13" cy="2" r="1.400" fill="#222" />
        </Smooth>
      </div>
    </>
  );
}

function ScalePage() {
  const off = "text-[#46494d]";
  return (
    <div className="flex grow flex-col bg-[#252525] font-['Liberation_Sans',sans-serif] text-white">
      <div className="z-10 flex h-[47px] shrink-0 items-center bg-gradient-to-b from-[#fff015] to-black pb-[3px] shadow-[0_2px_6px_rgba(0,0,0,0.7)]">
        <div className="ml-[15px] flex w-5 flex-col gap-[3px]">
          <i className="h-[2px] bg-white" />
          <i className="h-[2px] bg-white" />
          <i className="h-[2px] bg-white" />
        </div>
        <div className="grow pr-[35px] text-center text-xl text-white [-webkit-text-stroke:0.3px_white] [text-shadow:0_1px_2px_rgba(0,0,0,0.4)]">Indicador de Pesagem</div>
      </div>
      <div className="h-[25px] shrink-0 bg-[#ffff00] pl-[5px] text-xl leading-6 text-black">
        Falha de comunicação entre o CLP e o Transmissor.
      </div>
      <div className="mx-auto mt-5 w-[600px] grow">
        <div className="h-10 bg-[#45484d]" />
        <div className="mt-[5px] flex h-40 items-center justify-center border border-[#45484d] text-[80px] leading-none [-webkit-text-stroke:0.6px_white]">0.3kg</div>
        <div className="mt-[5px] grid h-7 grid-cols-4 text-center text-base leading-[25px]">
          <div className="border border-[#45484d] bg-[linear-gradient(#00720f_30%,#00ac1d_75%)]">Estável</div>
          <div className={"border border-[#45484d] " + off}>Zero</div>
          <div className="border border-[#45484d] bg-[linear-gradient(#cc6c00_30%,#ff8a00_85%)]">Bruto</div>
          <div className={"border border-[#45484d] " + off}>Líquido</div>
        </div>
        <div className="mt-8 h-10 bg-[#45484d] text-center text-xl leading-10">Comandos</div>
        <div className="mt-[5px] flex h-[102px] justify-between bg-[#45484d] pl-[11px] pr-[9px] pt-[11px] text-xl font-bold">
          <button className="h-20 w-[228px] rounded-[5px] border border-[#252525]">ZERO</button>
          <button className="h-20 w-[228px] rounded-[5px] border border-[#252525]">TARA</button>
        </div>
      </div>
      <div className="flex h-[42px] shrink-0 justify-center border-t border-black bg-gradient-to-b from-[#45484d] to-black shadow-[0_-2px_8px_rgba(0,0,0,0.5)]">
        <div className="flex w-full justify-center border-t border-[#5b5a60] text-[13.700px] tracking-[-0.050px]">
          <div className="ml-[-5px] flex w-[122px] items-center justify-center gap-1 border-x border-black bg-gradient-to-b from-black to-[#37393d] pt-px [-webkit-text-stroke:0.2px_white]">
            <Smooth className="h-5 w-[19px]" box="0 0 19 20">
              <path d="M9.500 0L0 10h2.500v9.500h5V13h4v6.500h5V10H19z" fill="#fff" />
            </Smooth>
            <span className="pt-[9px]">Indicador</span>
          </div>
          <div className="flex w-[122px] items-center justify-center gap-[3px] border-r border-black pt-px [-webkit-text-stroke:0.2px_white]">
            <Smooth className="mb-1 h-[18px] w-5" box="0 0 20 18">
              <path d="M1.500 16.500L12 7" stroke="#fff" strokeWidth="3.600" />
              <path d="M16 0c-3-.5-6 2-5.500 5.500C11 8.500 14 10 17 9c2-1 3-3 2.500-5.500L16 6.500l-2.500-2z" fill="#fff" />
            </Smooth>
            <span className="pt-[8px]">Ajustes</span>
          </div>
        </div>
      </div>
    </div>
  );
}

function BrowserWindow() {
  return (
    <div className="ml-[3px] flex w-[957px] flex-col rounded-[4px] border-b-[3px] border-l-2 border-r-[3px] border-[#e6e6e6] bg-[#e8e8e8]">
      <BrowserChrome />
      <div className="h-px shrink-0 bg-[#e0e0a0]" />
      <ScalePage />
    </div>
  );
}

/* ---------- Taskbar ---------- */

function Taskbar() {
  const btn =
    "flex h-[38px] w-[59px] items-center justify-center rounded-[3px] border border-[#5c7088] shadow-[inset_0_0_0_1px_rgba(255,255,255,0.6)]";
  const fill = " bg-gradient-to-br from-[#cfdceb] via-[#b4c8df] to-[#aec4dd]";
  return (
    <div className="flex h-[39px] items-center border-t border-[#dbe8f5] bg-[linear-gradient(90deg,#8294aa_0,#8294aa_40px,#a5bfdc_85px,#a5bfdc_1632px,#8294aa_1666px,#8294aa_100%)]">
      <Smooth className="ml-2 h-[37px] w-[38px]" box="0 0 38 37">
        <defs>
          <radialGradient id="orb" cx=".5" cy=".9" r=".85">
            <stop offset="0" stopColor="#3ad8ff" />
            <stop offset=".45" stopColor="#17689c" />
            <stop offset="1" stopColor="#1f3f66" />
          </radialGradient>
          <linearGradient id="shine" x1="0" y1="0" x2="0" y2="1">
            <stop offset="0" stopColor="#fff" stopOpacity=".65" />
            <stop offset="1" stopColor="#fff" stopOpacity=".1" />
          </linearGradient>
        </defs>
        <circle cx="19" cy="18.500" r="17.600" fill="url(#orb)" stroke="#173350" />
        <path d="M4 17C5 7 12 2.500 19 2.500S33 7 34 17c-8 3-22 3-30 0z" fill="url(#shine)" />
        <path d="M11.500 9.500c3-1.500 5-1 7.500.5l-2 8c-2.500-1.500-5-1.500-7.500 0z" fill="#ea5a24" />
        <path d="M20 10.500c3 1.500 6 1.500 9-.5l-2 8c-3 2-6 2-9 .5z" fill="#8cc63f" />
        <path d="M9 19.500c3-1.500 5-1.500 7.500 0l-2 8c-2.500-1.500-5-1.500-7.500 0z" fill="#4fb0ee" />
        <path d="M17.500 20c3 1.500 6 1.500 9-.5l-2 8c-3 2-6 2-9 .5z" fill="#fcc419" />
      </Smooth>
      <Smooth className="ml-[27px] h-[32px] w-[32px]" box="0 0 32 32">
        <path d="M26.500 20.500a10.500 10.500 0 1 1 .5-4H9.500" stroke="#2b9de0" strokeWidth="5" />
        <path d="M26.500 20.500a10.500 10.500 0 1 1 .5-4H9.500" stroke="#6fcbf5" strokeWidth="1.500" />
        <path d="M3 30c-5-4 3-17 12-23S30-.5 30.500 4c.2 1-.5 2.500-1 3.500" stroke="#f5b921" strokeWidth="2.600" />
      </Smooth>
      <Smooth className="ml-[29px] h-[30px] w-[34px]" box="0 0 34 30">
        <path d="M2 4c0-1 1-2 2-2h8l2 3h10l1-1h6v24H2z" fill="#f0d584" stroke="#c6a650" />
        <path d="M4 2h7v3H4z" fill="#18a038" />
        <path d="M12 4h8v3h-8z" fill="#d35b3c" />
        <path d="M21 6h8v3h-8z" fill="#3a9ae0" />
        <path d="M3 9h29v19H3z" fill="#f8e9a8" />
        <path d="M5 30V21c0-2 1-3 3-3h18c2 0 3 1 3 3v9h-5v-7H10v7z" fill="#8cc5e6" stroke="#5ea3cf" />
      </Smooth>
      <Smooth className="ml-[29px] h-[26px] w-[31px]" box="0 0 31 26">
        <path d="M6 1h20v24H6z" fill="#5d9fd0" stroke="#417fae" />
        <path d="M1 1.500h20v23H1z" fill="#8dc0e4" stroke="#5794c2" />
        <circle cx="11.500" cy="13" r="8.800" fill="#ee6b17" />
        <path d="M8.500 7.500l8.500 5.500-8.500 5.500z" fill="#fff" />
      </Smooth>
      <div className={"ml-[17px] " + btn + fill}>
        <Smooth className="h-[33px] w-[33px]" box="0 0 33 33">
          <defs>
            <linearGradient id="edgeTop" x1="0" y1=".4" x2="1" y2=".5">
              <stop offset="0" stopColor="#27a9dd" />
              <stop offset=".5" stopColor="#35c1d0" />
              <stop offset="1" stopColor="#64d354" />
            </linearGradient>
          </defs>
          <circle cx="16.500" cy="16.500" r="16" fill="#1273cc" />
          <path d="M.5 15C1.500 6 8 .5 16.500.5S32.500 7 32.500 14c0 5-4 7.500-8 7.500-3 0-5-1-4.500-2.500 1.500-2.500.5-8-6-8C8 10.500 2 12 .5 15z" fill="url(#edgeTop)" />
          <path d="M13 14c-3 3-2.500 10 3 13.500 5 3 11 1.500 14.500-2 0 0-4 1.500-8 0s-6-4-4.500-6.500c-1-2-1-4-5-5z" fill="#b4c8df" />
          <path d="M13 14c-4 4-3 10 2 14 4 3 9 3 12 1.500-7 5-18 3.500-21-5-2-6 2-10 7-10.500z" fill="#0c59a4" />
        </Smooth>
      </div>
      <div className={"ml-[3px] " + btn + fill}>
        <Pix className="h-[32px] w-[32px]" box="0 0 32 32">
          <path d="M3 15l18 16M16 5l6 3v6l-4 5h-5l-4-3M17 19l6 2" stroke="#3c3a06" strokeWidth="4.500" shapeRendering="auto" />
          <path d="M3 15l18 16M16 5l6 3v6l-4 5h-5l-4-3M17 19l6 2" stroke="#efe53c" strokeWidth="2.500" shapeRendering="auto" />
          <path d="M3.500.5h11v9h-11z" fill="#d9d9d9" stroke="#000" />
          <path d="M6 2h6v6H6z" fill="#0a12d8" />
          <path d="M1.500 9.500h13v5h-13z" fill="#c9c9c9" stroke="#000" />
          <path d="M9 12h4v1H9z" fill="#333" />
          <path d="M20 18l2-2h10v13l-2 3H20z" fill="#111" />
          <path d="M23 19h1v11h-1zM26 19h1v11h-1zM29 19h1v11h-1z" fill="#777" />
          <path d="M21 20h1v2h-1z" fill="#3c3" />
          <path d="M21 23h1v2h-1z" fill="#e11" />
        </Pix>
      </div>
      <div className={"ml-[3px] bg-gradient-to-br from-[#eef3f8] via-[#d5e0ec] to-[#dbe5f0] " + btn}>
        <GearsIcon className="h-[32px] w-[32px]" gear="#ffffff" line="#c4c4c4" />
      </div>
      <div className="ml-auto flex items-center text-[11.500px] text-white">
        <span className="mb-[7px] text-[11px]">PT</span>
        <Smooth className="ml-4 mt-px h-[6px] w-[10px]" box="0 0 10 6"><path d="M5 .5L9.500 5.500h-9z" fill="#fff" stroke="#49566a" strokeWidth=".7" /></Smooth>
        <Smooth className="ml-[11px] h-[17px] w-4" box="0 0 16 17">
          <path d="M10 2.500H3.500v13h8V12" stroke="#2e3845" strokeWidth="3.500" />
          <path d="M10 2.500H3.500v13h8V12" stroke="#fff" strokeWidth="1.600" />
          <path d="M7 5h8v3c0 2-1.500 3-3 3v2h-2v-2C8.500 11 7 10 7 8z" fill="#fff" stroke="#2e3845" strokeWidth=".8" />
          <path d="M9 2v3M13 2v3" stroke="#fff" strokeWidth="1.500" />
        </Smooth>
        <Smooth className="ml-2 h-[18px] w-4" box="0 0 16 18">
          <path d="M1 6h2l5-5v15l-5-5H1z" fill="#f4f4f4" stroke="#3d4856" />
          <circle cx="11.500" cy="12.500" r="4.300" fill="#d8221c" stroke="#fff" strokeWidth=".6" />
          <path d="M9.800 10.800l3.400 3.400M13.200 10.800l-3.400 3.400" stroke="#fff" strokeWidth="1.400" />
        </Smooth>
        <Smooth className="ml-2 h-[18px] w-4" box="0 0 16 18">
          <path d="M1.500 1v16" stroke="#fff" strokeWidth="1.600" />
          <path d="M3 2c4-2 6 2 10 0v8c-4 2-6-2-10 0z" fill="#eef1f4" stroke="#3d4856" />
          <circle cx="11.500" cy="12.500" r="4.300" fill="#d8221c" stroke="#fff" strokeWidth=".6" />
          <path d="M9.800 10.800l3.400 3.400M13.200 10.800l-3.400 3.400" stroke="#fff" strokeWidth="1.400" />
        </Smooth>
        <Smooth className="ml-2 h-[18px] w-4" box="0 0 16 18">
          <path d="M5.500 3.500h9v10h-9z" fill="#8294aa" stroke="#fff" strokeWidth="1.400" />
          <path d="M1 1v4h5V1M3.500 5v11h4" stroke="#fff" strokeWidth="1.500" />
          <path d="M10.500 8l5 9h-10z" fill="#f8d51f" stroke="#7c6a0a" strokeWidth=".6" />
          <path d="M10.500 11v3M10.500 15v1.300" stroke="#111" strokeWidth="1.300" />
        </Smooth>
        <div className="ml-[17px] flex w-[60px] flex-col items-center leading-[17px] tracking-[-0.2px]">
          <span>17:53</span>
          <span>26/03/2022</span>
        </div>
        <div className="ml-[10px] h-[38px] w-[15px] border border-[#4f5f74] bg-gradient-to-b from-[#a7b3c2] via-[#6f8197] to-[#8898ab] shadow-[inset_0_0_0_1px_rgba(255,255,255,0.35)]" />
      </div>
    </div>
  );
}

export default function App() {
  return (
    <div className="flex h-[975px] w-[1920px] flex-col overflow-hidden bg-[#1a1a1a] font-['Noto_Sans',sans-serif]">
      <div className="flex h-[936px] pb-[2px]">
        <div className="flex w-[959px] pt-[2px]">
          <LogixWindow />
        </div>
        <div className="flex w-[961px] pr-px pt-[1px]">
          <BrowserWindow />
        </div>
      </div>
      <Taskbar />
    </div>
  );
}
